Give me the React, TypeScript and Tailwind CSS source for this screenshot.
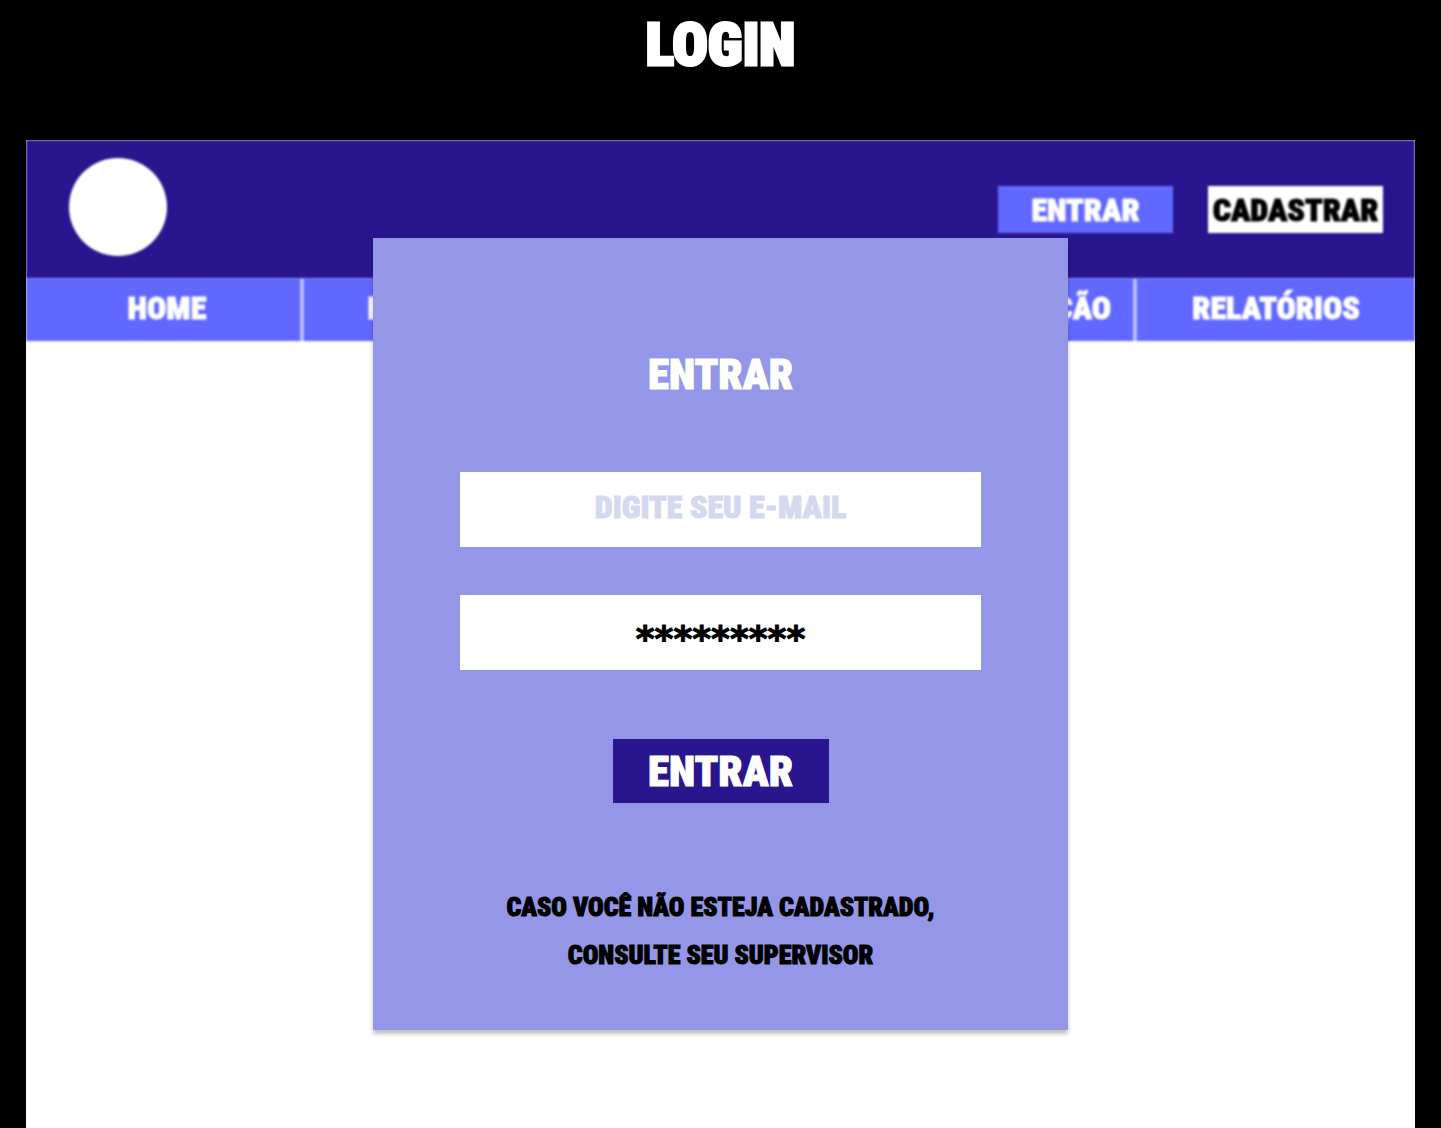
import React from "react";

const navCell = "flex h-full items-center justify-center pb-1";

function SiteHeader() {
  return (
    <div className="blur-[1px]">
      <header className="flex h-[138px] items-center justify-between bg-[#29168e] pr-8 pl-[43px]">
        <div className="mb-1 size-[98px] rounded-full bg-white" />
        <div className="flex gap-[35px] text-[32px] leading-none">
          <button className="h-[47px] w-[175px] bg-[#6168ff] pt-0.5 text-white">ENTRAR</button>
          <button className="h-[47px] w-[175px] bg-white pt-0.5 text-black">CADASTRAR</button>
        </div>
      </header>
      <nav className="grid h-[63px] grid-cols-5 divide-x-4 divide-[#b9bcff] border-t border-[#8c90ff] bg-[#6168ff] text-[32px] leading-none text-white">
        <a href="#home" className={`${navCell} pl-2`}>HOME</a>
        <a href="#produtos" className={navCell}>PRODUTOS</a>
        <span />
        <a href="#movimentacao" className={`${navCell} pl-2`}>MOVIMENTAÇÃO</a>
        <a href="#relatorios" className={navCell}>RELATÓRIOS</a>
      </nav>
    </div>
  );
}

function LoginDialog() {
  const [email, setEmail] = React.useState("");
  const [password, setPassword] = React.useState("*********");
  return (
    <form
      role="dialog"
      aria-labelledby="login-title"
      onSubmit={(e) => e.preventDefault()}
      className="flex w-full flex-col items-center bg-[#9497e7] pt-28 pb-[51px] shadow-[0_4px_4px_rgba(0,0,0,0.25)]"
    >
      <h2 id="login-title" className="text-[43px] leading-[48px] text-white">ENTRAR</h2>
      <input
        type="email"
        aria-label="E-mail"
        placeholder="DIGITE SEU E-MAIL"
        value={email}
        onChange={(e) => setEmail(e.target.value)}
        className="mt-[74px] h-[75px] w-3/4 bg-white pb-1.5 text-center text-[32px] text-black placeholder:text-[#d5d9ef] placeholder:opacity-100"
      />
      <input
        type="text"
        aria-label="Senha"
        value={password}
        onChange={(e) => setPassword(e.target.value)}
        className="mt-12 h-[75px] w-3/4 bg-white pt-3 text-center font-['DejaVu_Sans',sans-serif] text-[36px] text-black"
      />
      <button type="submit" className="mt-[69px] h-16 w-[216px] bg-[#29168e] text-[43px] leading-none text-white">
        ENTRAR
      </button>
      <p className="mt-20 text-center text-[26px] leading-12 text-black">
        CASO VOCÊ NÃO ESTEJA CADASTRADO,
        <br />
        CONSULTE SEU SUPERVISOR
      </p>
    </form>
  );
}

export default function App() {
  return (
    <div className="flex min-h-screen flex-col bg-black px-[26px] font-['Roboto_Condensed','Roboto',sans-serif] font-black [-webkit-text-stroke-width:1px]">
      <h1 className="h-[140px] pt-3 text-center text-[59px] leading-[66px] text-white [-webkit-text-stroke-width:3px]">
        LOGIN
      </h1>
      <main className="grid flex-1 overflow-hidden bg-white">
        <div className="col-start-1 row-start-1">
          <SiteHeader />
        </div>
        <div className="z-10 col-start-1 row-start-1 mx-auto w-1/2 pt-[98px] pb-[98px]">
          <LoginDialog />
        </div>
      </main>
    </div>
  );
}
